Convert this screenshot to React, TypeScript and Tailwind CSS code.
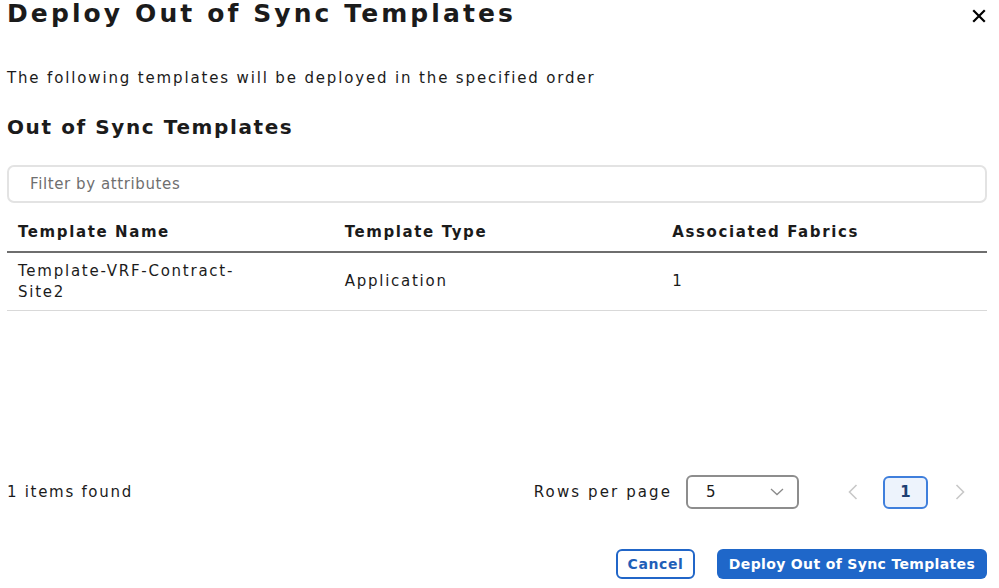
import React from "react";

const font = { fontFamily: '"DejaVu Sans", "Liberation Sans", sans-serif' };

export default function App() {
  return (
    <div
      className="w-[999px] h-[588px] bg-white text-[#1b1b1b] pl-[7px] pr-[12px] flex flex-col overflow-hidden"
      style={font}
    >
      <div className="flex items-start justify-between h-[40px]">
        <h1 className="text-[25px] leading-[30px] font-bold tracking-[3.1px] mt-[-1px]">
          Deploy Out of Sync Templates
        </h1>
        <button className="mt-[9px] mr-[1px] text-black" aria-label="close">
          <svg width="14" height="14" viewBox="0 0 14 14" fill="none" stroke="currentColor" strokeWidth="2.2" strokeLinecap="square">
            <path d="M2 2 L12 12 M12 2 L2 12" />
          </svg>
        </button>
      </div>

      <p className="mt-[28px] text-[15px] leading-[20px] tracking-[1.85px]">
        The following templates will be deployed in the specified order
      </p>

      <h2 className="mt-[25px] text-[20px] leading-[28px] font-bold tracking-[1.6px]">
        Out of Sync Templates
      </h2>

      <div className="mt-[24px] h-[38px] rounded-[7px] border-2 border-[#e3e3e3] flex items-center pl-[21px]">
        <span className="text-[15px] text-[#6f6f6f] tracking-[0.6px]">Filter by attributes</span>
      </div>

      <div className="mt-[9px] grid grid-cols-3 border-b-2 border-[#6e6e6e] h-[41px] items-center pt-[2px] text-[15px] font-bold tracking-[1.6px]">
        <div className="px-[11px]">Template Name</div>
        <div className="px-[11px]">Template Type</div>
        <div className="px-[12px]">Associated Fabrics</div>
      </div>

      <div className="grid grid-cols-3 border-b border-[#d9d9d9] h-[58px] items-center text-[15px] leading-[21px] tracking-[1.75px]">
        <div className="px-[11px]">
          <div className="max-w-[245px]">Template-VRF-Contract-Site2</div>
        </div>
        <div className="px-[11px]">Application</div>
        <div className="px-[12px]">1</div>
      </div>

      <div className="mt-[164px] flex items-center justify-between h-[34px]">
        <span className="text-[15px] tracking-[1.7px]">1 items found</span>
        <div className="flex items-center">
          <span className="text-[15px] tracking-[2.1px]">Rows per page</span>
          <div className="ml-[14px] w-[113px] h-[34px] rounded-[6px] border-2 border-[#8d8d8d] flex items-center justify-between pl-[18px] pr-[13px]">
            <span className="text-[15px]">5</span>
            <svg width="14" height="8" viewBox="0 0 14 8" fill="none" stroke="#8a8a8a" strokeWidth="1.3">
              <path d="M1 1 L7 6.5 L13 1" />
            </svg>
          </div>
          <button className="ml-[38px] w-[32px] h-[32px] flex items-center justify-center text-[#c8c8c8]">
            <svg width="10" height="16" viewBox="0 0 10 16" fill="none" stroke="currentColor" strokeWidth="1.6">
              <path d="M8.5 1 L1.5 8 L8.5 15" />
            </svg>
          </button>
          <button className="ml-[14px] w-[45px] h-[33px] rounded-[6px] border-2 border-[#3f7fdc] bg-[#edf3fc] text-[15px] font-bold text-[#1e3f73] flex items-center justify-center">
            1
          </button>
          <button className="ml-[16px] w-[32px] h-[32px] flex items-center justify-center text-[#c8c8c8]">
            <svg width="10" height="16" viewBox="0 0 10 16" fill="none" stroke="currentColor" strokeWidth="1.6">
              <path d="M1.5 1 L8.5 8 L1.5 15" />
            </svg>
          </button>
          <div className="w-[11px]" />
        </div>
      </div>

      <div className="mt-[40px] flex justify-end gap-[22px]">
        <button className="h-[30px] w-[79px] rounded-[6px] border-2 border-[#2166c8] text-[#1f5fb8] text-[14px] font-bold tracking-[0.6px] flex items-center justify-center">
          Cancel
        </button>
        <button className="h-[30px] w-[270px] rounded-[6px] bg-[#1f67c9] text-white text-[14px] font-bold tracking-[0.35px] flex items-center justify-center">
          Deploy Out of Sync Templates
        </button>
      </div>
    </div>
  );
}
